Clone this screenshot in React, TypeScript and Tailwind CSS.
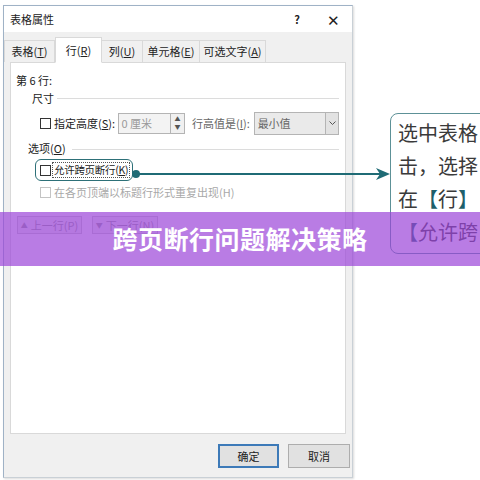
import React from 'react';

const cjk = { fontFamily: '"Noto Sans CJK SC", "Noto Sans", sans-serif' };

const tabs = [
  { label: '表格', key: 'T', w: 'w-[51px]' },
  { label: '行', key: 'R', w: 'w-[47px]', active: true },
  { label: '列', key: 'U', w: 'w-[42px]' },
  { label: '单元格', key: 'E', w: 'w-[58px]' },
  { label: '可选文字', key: 'A', w: 'w-[67px]' },
];

function Box({ gray }: { gray?: boolean }) {
  return (
    <span
      className={`inline-block w-[11px] h-[11px] shrink-0 border bg-white ${gray ? 'border-[#c4c4c4]' : 'border-[#333]'}`}
    />
  );
}

function Key({ k }: { k: string }) {
  return (
    <>
      (<span className="underline">{k}</span>)
    </>
  );
}

export default function App() {
  return (
    <div className="relative w-[480px] h-[480px] overflow-hidden bg-white pt-[5px] pl-[3px] text-[11px] text-[#222] whitespace-nowrap" style={cjk}>
      {/* dialog */}
      <div className="w-[350px] h-[473px] flex flex-col bg-[#f0f0f0] border border-[#9fb2c6] border-r-[#c9d0d6] border-b-[#c9d0d6] shadow-[1px_1px_2px_rgba(0,0,0,0.15)]">
        <div className="h-[26px] shrink-0 bg-white flex items-center pl-[6px] pr-[12px]">
          <span>表格属性</span>
          <span className="ml-auto font-bold text-[11px]">?</span>
          <span className="ml-[27px] text-[15px] font-light leading-none">✕</span>
        </div>

        <div className="h-[30px] shrink-0 flex items-end pl-[1px]">
          {tabs.map((t) => (
            <div
              key={t.key}
              className={`${t.w} flex items-center justify-center border border-[#d9d9d9] ${
                t.active ? 'h-[26px] bg-white border-b-white relative z-10 -mb-px' : 'h-[22px] bg-[#f0f0f0] border-b-0 -ml-px'
              }`}
            >
              {t.label}
              <Key k={t.key} />
            </div>
          ))}
        </div>

        <div className="mx-[6px] h-[372px] shrink-0 bg-white border border-[#d9d9d9] pt-[10px] pl-[5px] pr-[6px]">
          <div className="h-[14px] leading-[14px]">第 6 行:</div>
          <div className="mt-[4px] h-[14px] flex items-center pl-[16px]">
            <span>尺寸</span>
            <div className="flex-1 h-px bg-[#dcdcdc] ml-[3px]" />
          </div>

          <div className="mt-[7px] h-[22px] flex items-center pl-[24px]">
            <Box />
            <span className="ml-[3px] w-[64px]">
              指定高度<Key k="S" />:
            </span>
            <div className="w-[54px] h-[21px] border border-[#b4b4b4] bg-[#f3f3f3] text-[#9a9a9a] flex items-center pl-[3px]">
              0 厘米
            </div>
            <div className="w-[14px] h-[21px] border border-l-0 border-[#b4b4b4] bg-[#f0f0f0] flex flex-col items-center justify-center text-[6px] leading-[8px] text-[#555]">
              <span>▲</span>
              <span>▼</span>
            </div>
            <span className="ml-[7px] w-[62px] text-[#666]">
              行高值是<Key k="I" />:
            </span>
            <div className="w-[86px] h-[23px] border border-[#b4b4b4] bg-[#eaeaea] flex items-center text-[#666]">
              <span className="pl-[3px] flex-1">最小值</span>
              <div className="w-[13px] h-full border-l border-[#b4b4b4] bg-[#e2e2e2] flex items-center justify-center">
                <svg width="7" height="5" viewBox="0 0 7 5">
                  <path d="M0.5 0.5 L3.5 3.5 L6.5 0.5" fill="none" stroke="#555" strokeWidth="1" />
                </svg>
              </div>
            </div>
          </div>

          <div className="mt-[4px] h-[20px] flex items-center pl-[12px]">
            <span>
              选项<Key k="O" />
            </span>
            <div className="flex-1 h-px bg-[#dcdcdc] ml-[6px] mt-[2px]" />
          </div>

          <div className="mt-[1px] h-[22px] flex items-center pl-[19px]">
            <div className="h-[22px] w-[98px] rounded-[6px] border-[1.5px] border-[#2d7078] flex items-center pl-[4px]">
              <Box />
              <span className="ml-[1px] px-[1px] border border-dotted border-[#555] leading-[14px] text-[10.5px] tracking-[-0.3px]">
                允许跨页断行<Key k="K" />
              </span>
            </div>
          </div>

          <div className="mt-[1px] h-[20px] flex items-center pl-[24px] text-[#a8a8a8]">
            <Box gray />
            <span className="ml-[3px]">
              在各页顶端以标题行形式重复出现(H)
            </span>
          </div>

          <div className="mt-[14px] h-[18px] flex items-center pl-[1px] gap-[10px] text-[#999]">
            <div className="w-[65px] h-[18px] border border-[#c8c8c8] bg-[#f0f0f0] flex items-center justify-center gap-[3px]">
              <span className="text-[7px]">▲</span>上一行(P)
            </div>
            <div className="w-[66px] h-[18px] border border-[#c8c8c8] bg-[#f0f0f0] flex items-center justify-center gap-[3px]">
              <span className="text-[7px]">▼</span>下一行(N)
            </div>
          </div>
        </div>

        <div className="flex-1 flex items-start justify-end pt-[10px] pr-[2px] gap-[9px]">
          <div className="w-[61px] h-[24px] border-2 border-[#3d7ab8] bg-[#e1e1e1] flex items-center justify-center">确定</div>
          <div className="w-[62px] h-[24px] border border-[#adadad] bg-[#e1e1e1] flex items-center justify-center">取消</div>
        </div>
      </div>

      {/* annotation arrow */}
      <svg className="absolute left-0 top-0 pointer-events-none" width="480" height="480">
        <circle cx="136" cy="174" r="4" fill="#1f6b75" />
        <line x1="136" y1="174" x2="380" y2="174" stroke="#1f6b75" strokeWidth="2" />
        <path d="M376 168 L390 174 L376 180 L380 174 Z" fill="#1f6b75" />
      </svg>

      {/* callout box */}
      <div className="absolute left-[390px] top-[113px] w-[130px] h-[141px] rounded-[8px] border-[1.5px] border-[#5d9197] bg-white pl-[7px] pt-[2px] text-[20px] leading-[33px] text-[#3a3a3a]">
        <div>选中表格</div>
        <div>击，选择</div>
        <div>
          在<span className="text-[#1e5f6b]">【</span>行<span className="text-[#1e5f6b]">】</span>
        </div>
        <div>
          <span className="text-[#1e5f6b]">【</span>允许跨
        </div>
      </div>

      {/* title banner */}
      <div className="absolute left-0 top-[212px] w-[480px] h-[54px] bg-[#9b45d8]/70 flex items-center justify-center">
        <span className="text-white text-[25px] font-bold tracking-[0.5px]">跨页断行问题解决策略</span>
      </div>
    </div>
  );
}
